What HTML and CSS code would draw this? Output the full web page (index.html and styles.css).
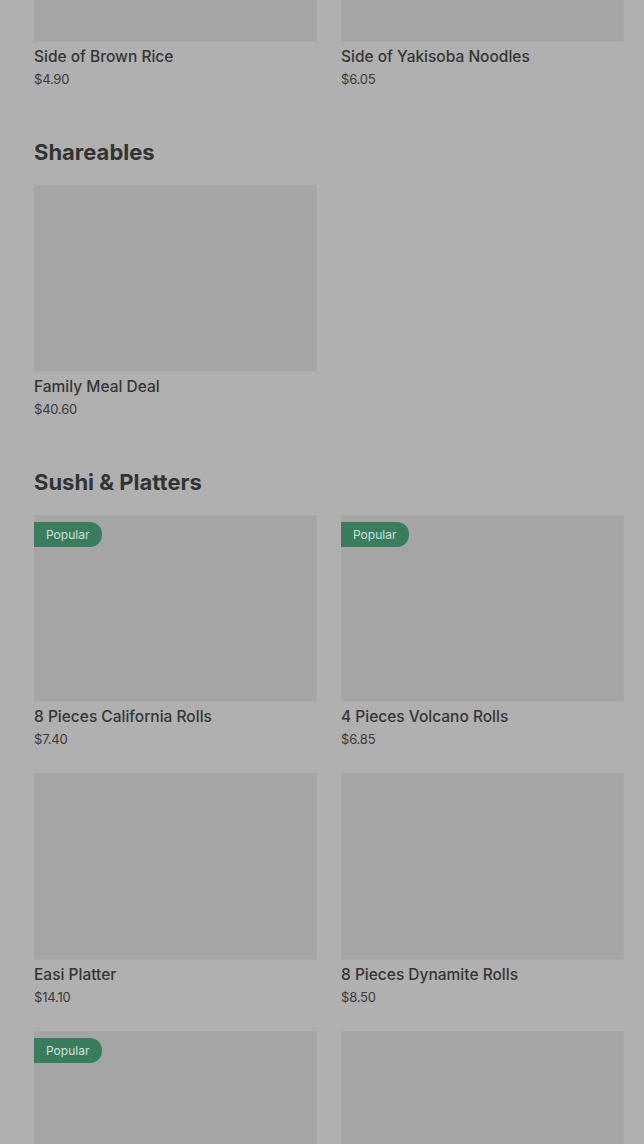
FILE: index.html
```html
<!DOCTYPE html>
<html>
<head>
<meta charset="utf-8">
<link rel="stylesheet" href="styles.css">
</head>
<body>
<div class="page">
  <section class="section first">
    <div class="grid">
      <div class="card"><div class="thumb"></div><div class="name">Side of Brown Rice</div><div class="price">$4.90</div></div>
      <div class="card"><div class="thumb"></div><div class="name">Side of Yakisoba Noodles</div><div class="price">$6.05</div></div>
    </div>
  </section>
  <section class="section">
    <h2 class="heading">Shareables</h2>
    <div class="grid">
      <div class="card"><div class="thumb"></div><div class="name">Family Meal Deal</div><div class="price">$40.60</div></div>
    </div>
  </section>
  <section class="section">
    <h2 class="heading">Sushi &amp; Platters</h2>
    <div class="grid">
      <div class="card"><div class="thumb"><span class="badge">Popular</span></div><div class="name">8 Pieces California Rolls</div><div class="price">$7.40</div></div>
      <div class="card"><div class="thumb"><span class="badge">Popular</span></div><div class="name">4 Pieces Volcano Rolls</div><div class="price">$6.85</div></div>
      <div class="card"><div class="thumb"></div><div class="name">Easi Platter</div><div class="price">$14.10</div></div>
      <div class="card"><div class="thumb"></div><div class="name">8 Pieces Dynamite Rolls</div><div class="price">$8.50</div></div>
      <div class="card"><div class="thumb"><span class="badge">Popular</span></div></div>
      <div class="card"><div class="thumb"></div></div>
    </div>
  </section>
</div>
</body>
</html>
```
FILE: styles.css
```css
html, body {
  margin: 0;
  padding: 0;
  background: #b0b0b0;
  height: 1144px;
  overflow: hidden;
}
body {
  font-family: Inter, "Liberation Sans", sans-serif;
  color: #333333;
}
.page {
  padding: 0 20px 0 34px;
}
.section.first {
  margin-top: -145px;
}
.section {
  margin-top: 49px;
}
.heading {
  margin: 0 0 19px 0;
  font-size: 22px;
  line-height: 28px;
  font-weight: 700;
  color: #333333;
}
.grid {
  display: grid;
  grid-template-columns: 283px 283px;
  column-gap: 24px;
  row-gap: 24px;
}
.card {
  display: flex;
  flex-direction: column;
}
.thumb {
  position: relative;
  height: 187px;
  box-sizing: border-box;
  background: #a5a5a5;
  border: 1px solid #a8a8a8;
  border-bottom-color: #aaaaaa;
}
.badge {
  position: absolute;
  left: -1px;
  top: 6px;
  height: 25px;
  line-height: 25px;
  padding: 0 13px 0 12px;
  font-size: 12px;
  color: #cfe3d8;
  background: #3a7c5e;
  border-radius: 0 12px 12px 0;
}
.name {
  margin-top: 4px;
  font-size: 15.5px;
  line-height: 21px;
  font-weight: 500;
  color: #353535;
}
.price {
  margin-top: 2px;
  font-size: 13px;
  line-height: 20px;
  color: #3a3a3a;
  letter-spacing: -0.2px;
}
```
